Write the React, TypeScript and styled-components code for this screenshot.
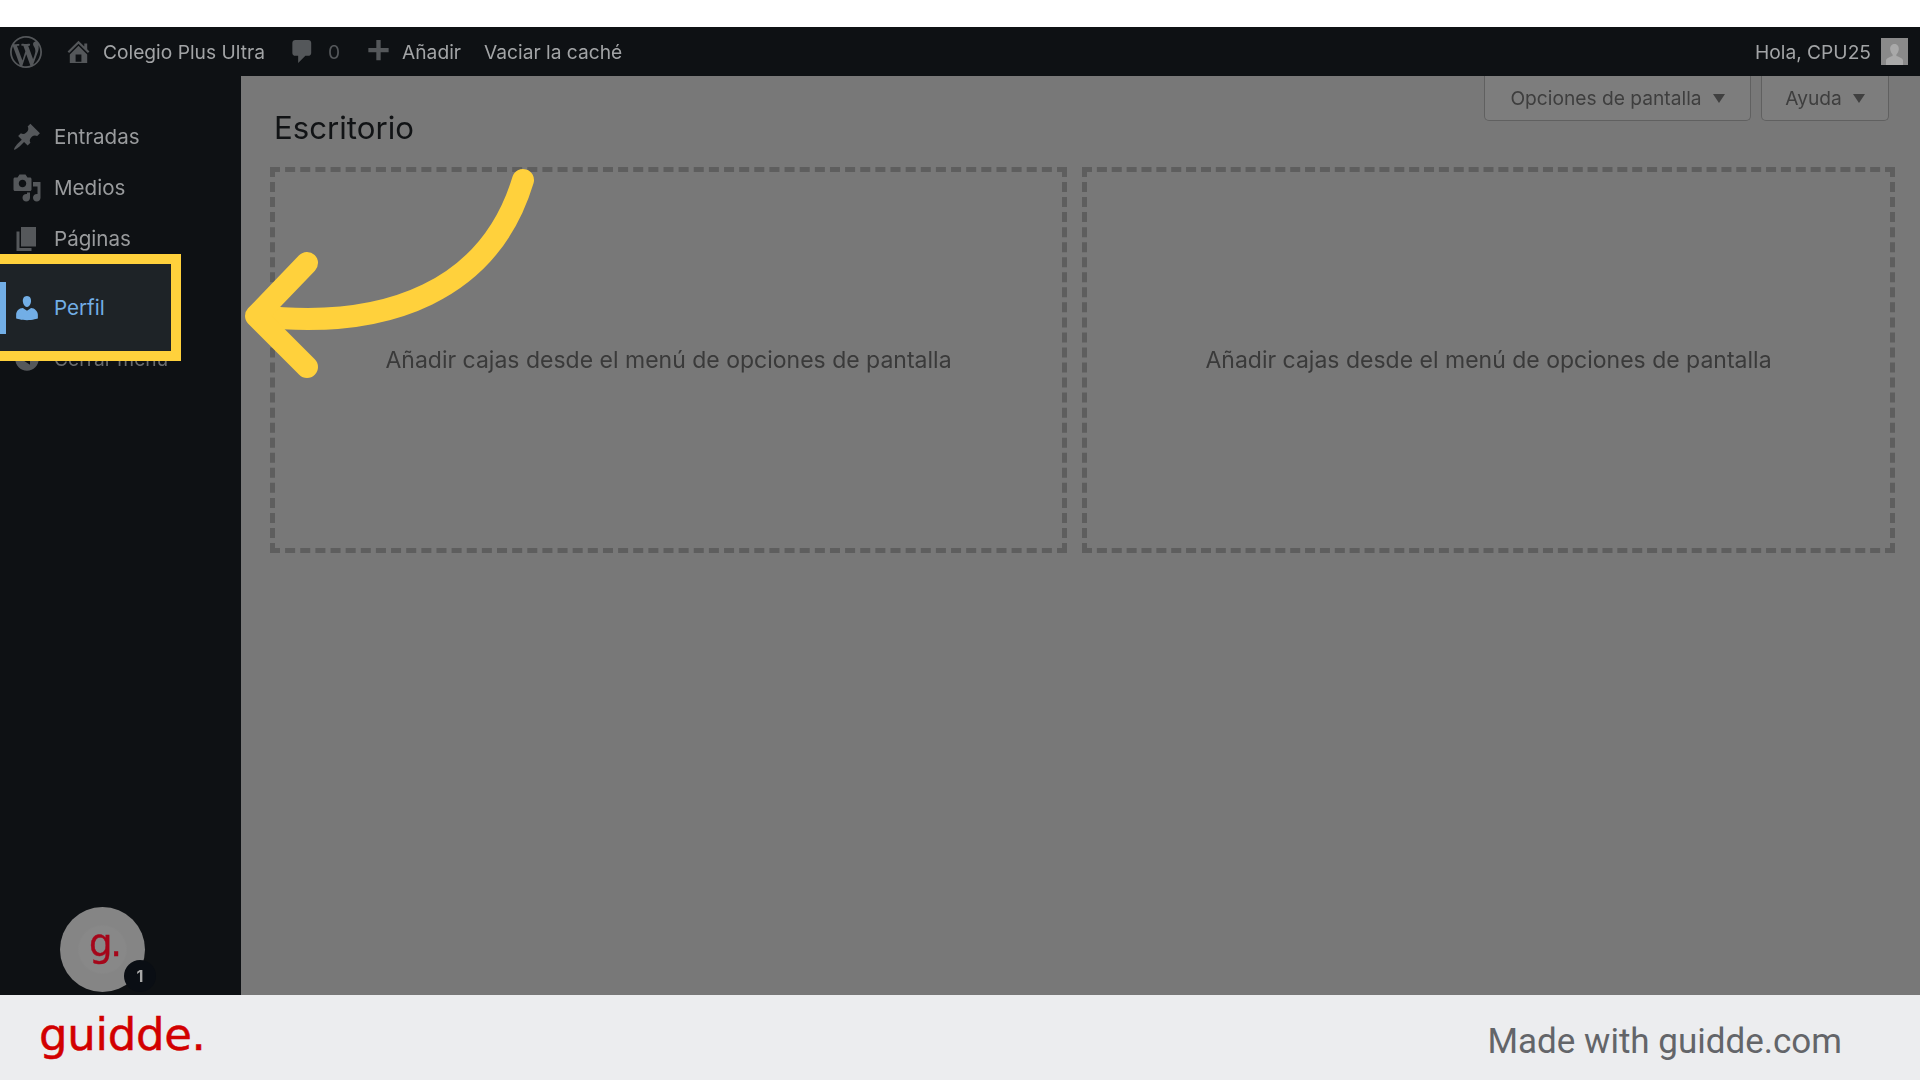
import React from "react";
import styled, { createGlobalStyle } from "styled-components";

const Global = createGlobalStyle`
  html, body { margin: 0; padding: 0; background: #fff; }
  #root { width: 1920px; height: 1080px; overflow: hidden; }
  * { box-sizing: border-box; }
`;

const Page = styled.div`
  width: 1920px;
  height: 1080px;
  display: flex;
  flex-direction: column;
  font-family: Inter, "Liberation Sans", sans-serif;
  background: #fff;
`;
const TopGap = styled.div`
  height: 27px;
  flex: none;
  background: #fff;
`;
const Stage = styled.div`
  position: relative;
  flex: 1;
  min-height: 0;
  overflow: hidden;
  background: #8a8a8a;
`;
const Dimmed = styled.div`
  height: 100%;
  display: flex;
  flex-direction: column;
  filter: blur(0.55px);
`;
const AdminBar = styled.header`
  height: 49px;
  flex: none;
  display: flex;
  align-items: center;
  padding: 0 12px 0 10px;
  background: #0e1114;
  color: #a2a4a6;
  font-size: 19.2px;
`;
const BarIcon = styled.svg<{ $size: number; $ml: number }>`
  width: ${(p) => p.$size}px;
  height: ${(p) => p.$size}px;
  margin-left: ${(p) => p.$ml}px;
  fill: #54575a;
  flex: none;
`;
const BarText = styled.span<{ $ml: number; $dim?: boolean }>`
  margin-left: ${(p) => p.$ml}px;
  color: ${(p) => (p.$dim ? "#54575a" : "#a2a4a6")};
  white-space: nowrap;
`;
const Greeting = styled.span`
  margin-left: auto;
  white-space: nowrap;
`;
const UserThumb = styled.div`
  width: 27px;
  height: 27px;
  margin-left: 10px;
  background: #8a8a8a;
  overflow: hidden;
  svg {
    width: 27px;
    height: 27px;
    fill: #a9a9a9;
    display: block;
  }
`;
const Body = styled.div`
  flex: 1;
  min-height: 0;
  display: flex;
`;
const Sidebar = styled.nav`
  width: 241px;
  flex: none;
  padding-top: 35px;
  background: #0e1114;
`;
const MenuRow = styled.div<{ $gapTop?: number; $faint?: boolean }>`
  height: 51px;
  margin-top: ${(p) => p.$gapTop ?? 0}px;
  display: flex;
  align-items: center;
  padding-left: 12px;
  color: ${(p) => (p.$faint ? "#6a6c6e" : "#999b9d")};
  font-size: ${(p) => (p.$faint ? 19.2 : 20.6)}px;
  white-space: nowrap;
`;
const MenuIcon = styled.svg<{ $color?: string }>`
  width: 30px;
  height: 30px;
  flex: none;
  margin-right: 12px;
  fill: ${(p) => p.$color ?? "#55585b"};
`;
const Content = styled.main`
  flex: 1;
  min-width: 0;
  background: #787878;
  padding: 0 25px 0 29px;
`;
const ContentHead = styled.div`
  height: 91px;
  display: flex;
  justify-content: space-between;
  align-items: flex-start;
`;
const Title = styled.h1`
  margin: 31px 0 0 4px;
  font-size: 31.2px;
  line-height: 42px;
  font-weight: 400;
  color: #111315;
`;
const MetaLinks = styled.div`
  display: flex;
  gap: 10px;
  margin-right: 6px;
`;
const MetaButton = styled.div<{ $w: number }>`
  width: ${(p) => p.$w}px;
  height: 45px;
  display: flex;
  align-items: center;
  justify-content: center;
  gap: 11px;
  background: #7d7d7d;
  border: 1.5px solid #606060;
  border-top: none;
  border-radius: 0 0 5px 5px;
  color: #3e3e3e;
  font-size: 19.2px;
  white-space: nowrap;
  &::after {
    content: "";
    width: 0;
    height: 0;
    border-left: 6px solid transparent;
    border-right: 6px solid transparent;
    border-top: 9px solid #404040;
  }
`;
const Boxes = styled.div`
  display: grid;
  grid-template-columns: 797px 813px;
  gap: 15px;
  height: 386px;
`;
const DropBox = styled.section`
  display: flex;
  align-items: center;
  justify-content: center;
  border: 5px dashed #5e5e5e;
  color: #3a3a3a;
  font-size: 23px;
`;
const Spotlight = styled.div`
  position: absolute;
  left: -12px;
  top: 227px;
  width: 193px;
  height: 107px;
  border: 10px solid #ffd13c;
  background: #1e2327;
  display: flex;
  align-items: center;
`;
const ActiveBar = styled.div`
  width: 6px;
  height: 52px;
  margin-left: 2px;
  background: #72aee6;
  flex: none;
`;
const ActiveRow = styled.div`
  display: flex;
  align-items: center;
  margin-left: 6px;
  color: #72aee6;
  font-size: 20.6px;
`;
const Arrow = styled.svg`
  position: absolute;
  left: 0;
  top: 0;
  width: 1920px;
  height: 968px;
  fill: none;
  stroke: #ffd13c;
  stroke-width: 22px;
  stroke-linecap: round;
  stroke-linejoin: round;
  pointer-events: none;
`;
const Bubble = styled.div`
  position: absolute;
  left: 60px;
  top: 880px;
  width: 85px;
  height: 85px;
  border-radius: 50%;
  background: radial-gradient(circle, #888888 0 23px, #858585 25px);
  display: flex;
  align-items: center;
  justify-content: center;
  color: #a5061a;
  font-family: "DejaVu Sans", sans-serif;
  font-size: 37px;
  letter-spacing: -2px;
  -webkit-text-stroke: 0.4px #a5061a;
  line-height: 1;
  padding: 0 0 12px 4px;
  filter: blur(0.4px);
`;
const Badge = styled.div`
  position: absolute;
  left: 64px;
  top: 53px;
  width: 32px;
  height: 32px;
  border-radius: 50%;
  background: #0a0e14;
  color: #a8a8a8;
  font-family: Inter, sans-serif;
  font-size: 16px;
  font-weight: 700;
  letter-spacing: 0;
  -webkit-text-stroke: 0;
  display: flex;
  align-items: center;
  justify-content: center;
`;
const Footer = styled.footer`
  height: 85px;
  flex: none;
  display: flex;
  align-items: center;
  justify-content: space-between;
  padding: 0 78px 0 39px;
  background: #ecedef;
`;
const Logo = styled.div`
  font-family: "DejaVu Sans", sans-serif;
  font-size: 45px;
  line-height: 1;
  color: #d20000;
  margin-top: -6px;
  letter-spacing: -0.3px;
  -webkit-text-stroke: 0.5px #d20000;
`;
const Credit = styled.div`
  font-family: Roboto, sans-serif;
  font-size: 35px;
  color: #636569;
  margin-top: 8px;
`;

const d = {
  wp: "M20 10c0-5.51-4.49-10-10-10C4.48 0 0 4.49 0 10c0 5.52 4.48 10 10 10 5.51 0 10-4.48 10-10zM7.78 15.37L4.37 6.22c.55-.02 1.17-.08 1.17-.08.5-.06.44-1.13-.06-1.11 0 0-1.45.11-2.37.11-.18 0-.37 0-.58-.01C4.12 2.69 6.87 1.11 10 1.11c2.33 0 4.45.87 6.05 2.34-.68-.11-1.65.39-1.65 1.58 0 .74.45 1.36.9 2.1.35.61.55 1.36.55 2.46 0 1.49-1.4 5-1.4 5l-3.03-8.37c.54-.02.82-.17.82-.17.5-.05.44-1.25-.06-1.22 0 0-1.44.12-2.38.12-.87 0-2.33-.12-2.33-.12-.5-.03-.56 1.2-.06 1.22l.92.08 1.26 3.41zM17.41 10c.24-.64.74-1.87.43-4.25.7 1.29 1.05 2.71 1.05 4.25 0 3.29-1.73 6.24-4.4 7.78.97-2.59 1.94-5.2 2.92-7.78zM6.1 18.09C3.12 16.65 1.11 13.53 1.11 10c0-1.3.23-2.48.72-3.59C3.25 10.3 4.67 14.2 6.1 18.09zm4.03-6.63l2.58 6.98c-.86.29-1.76.45-2.71.45-.79 0-1.57-.11-2.29-.33.81-2.38 1.62-4.72 2.42-7.1z",
  home: "M16 8.5l1.53 1.53-1.06 1.06L10 4.62l-6.47 6.47-1.06-1.06L10 2.5l4 4v-2h2v4zm-6-2.46l6 5.99V18H4v-5.97zM12 17v-5H8v5h4z",
  comment: "M5 2h9c1.1 0 2 .9 2 2v7c0 1.1-.9 2-2 2h-2l-5 5v-5H5c-1.1 0-2-.9-2-2V4c0-1.1.9-2 2-2z",
  plus: "M17 7.5v3h-5.5V16h-3v-5.5H3v-3h5.5V2h3v5.5z",
  pin: "M10.44 3.02l1.82-1.82 6.36 6.35-1.83 1.82c-1.05-.68-2.48-.57-3.41.36l-.75.75c-.92.93-1.04 2.35-.35 3.41l-1.83 1.82-2.41-2.41-2.8 2.79c-.42.42-3.38 2.71-3.8 2.29s1.86-3.39 2.28-3.81l2.79-2.79L4.1 9.36l1.83-1.82c1.05.69 2.48.57 3.4-.36l.75-.75c.93-.92 1.05-2.35.36-3.41z",
  media: "M13 11V4c0-.55-.45-1-1-1h-1.67L9 1H5L3.67 3H2c-.55 0-1 .45-1 1v7c0 .55.45 1 1 1h10c.55 0 1-.45 1-1zM7 4.5c1.38 0 2.5 1.12 2.5 2.5S8.38 9.5 7 9.5 4.5 8.38 4.5 7 5.62 4.5 7 4.5zM14 6h5v10.5c0 1.38-1.12 2.5-2.5 2.5S14 17.88 14 16.5s1.12-2.5 2.5-2.5c.17 0 .34.02.5.05V9h-3V6zm-4 8.05V13h2v3.5c0 1.38-1.12 2.5-2.5 2.5S7 17.88 7 16.5 8.12 14 9.5 14c.17 0 .34.02.5.05z",
  page: "M6 15V2h10v13H6zm-1 1h8v2H3V5h2v11z",
  user: "M10 9.25c-2.27 0-2.73-3.44-2.73-3.44C7 4.02 7.82 2 9.97 2c2.16 0 2.98 2.02 2.71 3.81 0 0-.41 3.44-2.68 3.44zm0 2.57L12.72 10c2.39 0 4.52 2.33 4.52 4.53v2.49s-3.65 1.13-7.24 1.13c-3.65 0-7.24-1.13-7.24-1.13v-2.49c0-2.25 1.94-4.48 4.47-4.48z",
  collapse: "M10 2.16c4.33 0 7.84 3.51 7.84 7.84s-3.51 7.84-7.84 7.84S2.16 14.33 2.16 10 5.71 2.16 10 2.16zm2 11.72V6.12L6.18 9.97z",
};

const P = ({ path }: { path: string }) => <path d={path} />;

export default function App() {
  const empty = "Añadir cajas desde el menú de opciones de pantalla";
  return (
    <Page>
      <Global />
      <TopGap />
      <Stage>
        <Dimmed>
          <AdminBar>
            <BarIcon $size={32} $ml={0} viewBox="0 0 20 20"><P path={d.wp} /></BarIcon>
            <BarIcon $size={29} $ml={22} viewBox="0 0 20 20"><P path={d.home} /></BarIcon>
            <BarText $ml={10}>Colegio Plus Ultra</BarText>
            <BarIcon $size={29} $ml={23} viewBox="0 0 20 20"><P path={d.comment} /></BarIcon>
            <BarText $ml={11} $dim>0</BarText>
            <BarIcon $size={29} $ml={24} viewBox="0 0 20 20"><P path={d.plus} /></BarIcon>
            <BarText $ml={9}>Añadir</BarText>
            <BarText $ml={23}>Vaciar la caché</BarText>
            <Greeting>Hola, CPU25</Greeting>
            <UserThumb>
              <svg viewBox="0 0 27 27"><path d="M13.5 6c3 0 4.7 2.6 4.3 5.6-.3 2.2-1.4 4-2.4 4.9v1.6c2.8 1 6 1.9 6.6 4.4V27H5v-4.5c.6-2.5 3.8-3.4 6.6-4.4v-1.6c-1-.9-2.1-2.7-2.4-4.9C8.8 8.6 10.5 6 13.5 6z" /></svg>
            </UserThumb>
          </AdminBar>
          <Body>
            <Sidebar>
              <MenuRow><MenuIcon viewBox="0 0 20 20"><P path={d.pin} /></MenuIcon>Entradas</MenuRow>
              <MenuRow><MenuIcon viewBox="0 0 20 20"><P path={d.media} /></MenuIcon>Medios</MenuRow>
              <MenuRow><MenuIcon viewBox="0 0 20 20"><P path={d.page} /></MenuIcon>Páginas</MenuRow>
              <MenuRow $gapTop={69} $faint><MenuIcon viewBox="0 0 20 20"><P path={d.collapse} /></MenuIcon>Cerrar menú</MenuRow>
            </Sidebar>
            <Content>
              <ContentHead>
                <Title>Escritorio</Title>
                <MetaLinks>
                  <MetaButton $w={267}>Opciones de pantalla</MetaButton>
                  <MetaButton $w={128}>Ayuda</MetaButton>
                </MetaLinks>
              </ContentHead>
              <Boxes>
                <DropBox>{empty}</DropBox>
                <DropBox>{empty}</DropBox>
              </Boxes>
            </Content>
          </Body>
        </Dimmed>
        <Bubble>
          g.
          <Badge>1</Badge>
        </Bubble>
        <Spotlight>
          <ActiveBar />
          <ActiveRow>
            <MenuIcon $color="#72aee6" viewBox="0 0 20 20"><P path={d.user} /></MenuIcon>
            Perfil
          </ActiveRow>
        </Spotlight>
        <Arrow viewBox="0 0 1920 968">
          <path d="M523 153 C490 262 390 304 257 289" />
          <path d="M307 236 L256 289 L307 340" />
        </Arrow>
      </Stage>
      <Footer>
        <Logo>guidde.</Logo>
        <Credit>Made with guidde.com</Credit>
      </Footer>
    </Page>
  );
}
